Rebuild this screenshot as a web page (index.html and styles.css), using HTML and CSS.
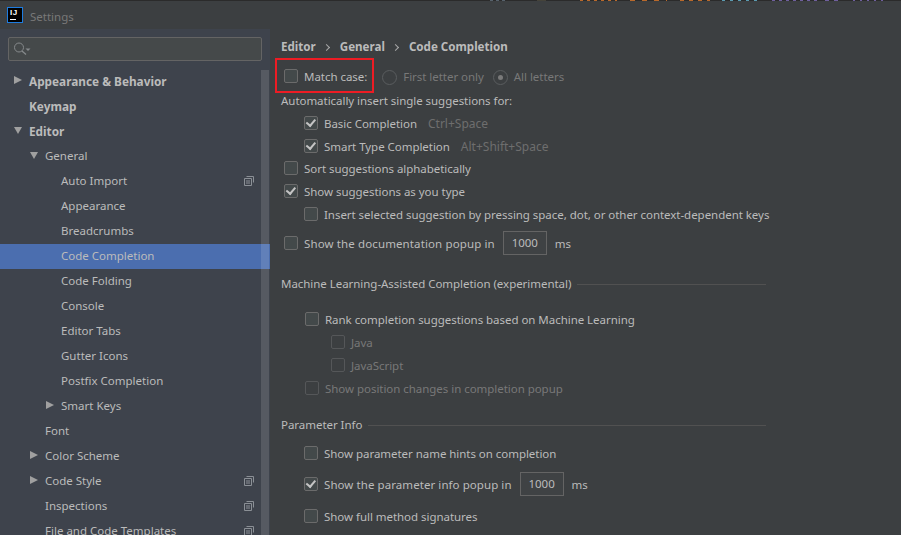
FILE: index.html
```html
<!DOCTYPE html>
<html lang="en">
<head>
<meta charset="utf-8">
<title>Settings</title>
<link rel="stylesheet" href="styles.css">
</head>
<body>
<div class="window">
  <div class="strip"></div>
  <header class="titlebar">
    <div class="ij-logo"><span class="ij-text">IJ</span><span class="ij-bar"></span></div>
    <span class="title">Settings</span>
  </header>
  <div class="content">
    <aside class="sidebar">
      <div class="search">
        <svg class="search-icon" width="18" height="14" viewBox="0 0 18 14"><circle cx="5" cy="5.5" r="4.5" fill="none" stroke="#868a8c" stroke-width="1"/><path d="M8 9 L12 12.5" stroke="#868a8c" stroke-width="1.3"/><path d="M11.5 6.5h5l-2.5 2.5z" fill="#868a8c"/></svg>
      </div>
      <div class="tree-wrap">
        <ul class="tree">
          <li class="node l0 bold"><i class="arrow right"></i>Appearance &amp; Behavior</li>
          <li class="node l0 bold">Keymap</li>
          <li class="node l0 bold"><i class="arrow down"></i>Editor</li>
          <li class="node l1"><i class="arrow down"></i>General</li>
          <li class="node l2">Auto Import<svg class="copy" viewBox="0 0 10 10"><use href="#copy"/></svg></li>
          <li class="node l2">Appearance</li>
          <li class="node l2">Breadcrumbs</li>
          <li class="node l2 selected">Code Completion</li>
          <li class="node l2">Code Folding</li>
          <li class="node l2">Console</li>
          <li class="node l2">Editor Tabs</li>
          <li class="node l2">Gutter Icons</li>
          <li class="node l2">Postfix Completion</li>
          <li class="node l2"><i class="arrow right"></i>Smart Keys</li>
          <li class="node l1">Font</li>
          <li class="node l1"><i class="arrow right"></i>Color Scheme</li>
          <li class="node l1"><i class="arrow right"></i>Code Style<svg class="copy" viewBox="0 0 10 10"><use href="#copy"/></svg></li>
          <li class="node l1">Inspections<svg class="copy" viewBox="0 0 10 10"><use href="#copy"/></svg></li>
          <li class="node l1">File and Code Templates<svg class="copy" viewBox="0 0 10 10"><use href="#copy"/></svg></li>
        </ul>
        <div class="scrollbar"></div>
      </div>
    </aside>
    <main class="main">
      <nav class="crumbs"><span>Editor</span><i class="chev"></i><span>General</span><i class="chev"></i><span>Code Completion</span></nav>
      <div class="row r-match">
        <label class="check highlight"><i class="box"></i>Match case:</label>
        <label class="radio off"><i class="dot"></i>First letter only</label>
        <label class="radio off"><i class="dot on"></i>All letters</label>
      </div>
      <div class="row r-plain">Automatically insert single suggestions for:</div>
      <div class="row r-23 in1"><label class="check"><i class="box checked"></i>Basic Completion</label><span class="hint">Ctrl+Space</span></div>
      <div class="row r-23 in1"><label class="check"><i class="box checked"></i>Smart Type Completion</label><span class="hint">Alt+Shift+Space</span></div>
      <div class="row r-22"><label class="check"><i class="box"></i>Sort suggestions alphabetically</label></div>
      <div class="row r-23"><label class="check"><i class="box checked"></i>Show suggestions as you type</label></div>
      <div class="row r-23 in1"><label class="check"><i class="box"></i>Insert selected suggestion by pressing space, dot, or other context-dependent keys</label></div>
      <div class="row r-29"><label class="check wide"><i class="box"></i>Show the documentation popup in</label><span class="num">1000</span><span class="unit">ms</span></div>
      <div class="row group r-40"><span>Machine Learning-Assisted Completion (experimental)</span><i class="rule"></i></div>
      <div class="row r-36 in1b"><label class="check"><i class="box"></i>Rank completion suggestions based on Machine Learning</label></div>
      <div class="row r-23 in2"><label class="check off"><i class="box dim"></i>Java</label></div>
      <div class="row r-23 in2"><label class="check off"><i class="box dim"></i>JavaScript</label></div>
      <div class="row r-23 in1b"><label class="check off"><i class="box dim"></i>Show position changes in completion popup</label></div>
      <div class="row group r-36"><span>Parameter Info</span><i class="rule"></i></div>
      <div class="row r-29 in1"><label class="check"><i class="box"></i>Show parameter name hints on completion</label></div>
      <div class="row r-31 in1"><label class="check wide-s"><i class="box checked"></i>Show the parameter info popup in</label><span class="num">1000</span><span class="unit">ms</span></div>
      <div class="row r-32 in1"><label class="check"><i class="box"></i>Show full method signatures</label></div>
    </main>
  </div>
</div>
<svg class="defs" width="0" height="0"><symbol id="copy" viewBox="0 0 10 10"><path d="M2.5 .5h7v6M.5 2.5h7v7h-7z" fill="none" stroke="#8b9096"/><path d="M2 5h4M2 7h4" stroke="#8b9096"/></symbol></svg>
</body>
</html>
```
FILE: styles.css
```css
*, *::after { box-sizing: border-box; }
html, body { margin: 0; height: 100%; overflow: hidden; }
body { background: #3c3f41; color: #bbbbbb; font: 11.5px/20px "Noto Sans", "Open Sans", sans-serif; }
ul { list-style: none; margin: 0; padding: 0; }
i { display: block; font-style: normal; }
.defs { position: absolute; }
.window { height: 535px; display: flex; flex-direction: column; overflow: hidden; }

.strip {
  height: 1px; flex: none; background-color: #2b2b2b; background-repeat: no-repeat; background-size: 18px 1px, 9px 1px, 37px 1px, 37px 1px, 30px 1px, 38px 1px, 45px 1px, 18px 1px, 30px 1px;
  background-position: 490px 0, 537px 0, 580px 0, 630px 0, 680px 0, 722px 0, 772px 0, 825px 0, 853px 0;
  background-image:
    repeating-linear-gradient(90deg, #56616b 0 3px, transparent 3px 6px),
    linear-gradient(#45433a, #45433a),
    repeating-linear-gradient(90deg, #b9692b 0 3px, transparent 3px 7px),
    repeating-linear-gradient(90deg, #b9692b 0 5px, transparent 5px 12px),
    repeating-linear-gradient(90deg, #b9692b 0 4px, transparent 4px 9px),
    repeating-linear-gradient(90deg, #5a9ab0 0 3px, transparent 3px 8px),
    repeating-linear-gradient(90deg, #6f5f9e 0 3px, transparent 3px 7px),
    repeating-linear-gradient(90deg, #6f5f9e 0 4px, transparent 4px 9px),
    repeating-linear-gradient(90deg, #6f5f9e 0 2px, transparent 2px 7px);
}
.titlebar { height: 28px; flex: none; display: flex; align-items: flex-start; padding: 6px 0 0 7px; gap: 7px; }
.ij-logo { width: 16px; height: 16px; background: #000; border: 1px solid #1e7ce0; display: flex; flex-direction: column; align-items: flex-start; padding: 1px 0 0 2px; }
.ij-text { font: bold 8px/8px "Liberation Sans", sans-serif; color: #fff; letter-spacing: .5px; }
.ij-bar { width: 6px; height: 1px; background: #fff; margin-top: 2px; }
.title { color: #787878; }

.content { flex: 1; display: flex; min-height: 0; }
.sidebar { width: 270px; flex: none; background: #3e434c; padding-top: 8px; display: flex; flex-direction: column; }
.search { margin: 0 8px; width: 254px; height: 24px; flex: none; background: #45494a; border: 1px solid #646464; border-radius: 2px; padding: 4px 0 0 5px; }
.search-icon { display: block; }
.tree-wrap { flex: 1; display: flex; min-height: 0; margin-top: 8px; position: relative; }
.tree { flex: 1; min-width: 0; }
.scrollbar { position: absolute; right: 1px; top: 1px; bottom: 0; width: 8px; background: rgba(255, 255, 255, .125); }
.node { height: 25px; line-height: 24px; white-space: nowrap; position: relative; }
.l0 { padding-left: 29px; }
.l1 { padding-left: 45px; }
.l2 { padding-left: 61px; }
.bold { font-weight: 700; font-size: 11.8px; }
.selected { background: #4b6eaf; }
.arrow { position: absolute; width: 0; height: 0; }
.arrow.right { border-left: 8px solid #a0a0a0; border-top: 4.5px solid transparent; border-bottom: 4.5px solid transparent; top: 7px; margin-left: -15px; }
.arrow.down { border-top: 7px solid #a0a0a0; border-left: 4.5px solid transparent; border-right: 4.5px solid transparent; top: 7.5px; margin-left: -15px; }
.copy { position: absolute; left: 244px; top: 7px; width: 10px; height: 10px; }

.main { flex: 1; min-width: 0; padding: 8px 0 0 11px; display: flex; flex-direction: column; }
.crumbs { height: 20px; flex: none; display: flex; align-items: center; font-weight: 700; font-size: 11.6px; }
.chev { width: 5px; height: 5px; border-top: 1px solid #a9a9a9; border-right: 1px solid #a9a9a9; transform: rotate(45deg); margin: 0 11px 0 8px; }
.row { height: 20px; flex: none; display: flex; align-items: center; white-space: nowrap; letter-spacing: -.04px; }
.r-match { margin-top: 10px; }
.r-plain { margin-top: 4px; }
.r-22 { margin-top: 2px; }
.r-23 { margin-top: 3px; }
.r-29 { margin-top: 9px; }
.r-31 { margin-top: 11px; }
.r-32 { margin-top: 12px; }
.r-36 { margin-top: 16px; }
.r-40 { margin-top: 20px; }
.in1 { padding-left: 23px; }
.in1b { padding-left: 24px; }
.in2 { padding-left: 50px; }
.row > .check:first-child { margin-left: 3px; }
.in1 > .check:first-child, .in1b > .check:first-child, .in2 > .check:first-child { margin-left: 0; }
.check { display: flex; align-items: center; gap: 6px; position: relative; }
.wide { letter-spacing: .12px; }
.wide-s { letter-spacing: .07px; }
.box { width: 14px; height: 14px; margin-top: -2px; background: #43494a; border: 1px solid #6b6b6b; border-radius: 2px; position: relative; flex: none; }
.box.checked::after { content: ""; position: absolute; left: 2px; top: 1px; width: 9px; height: 6px; border-left: 2px solid #c4c4c4; border-bottom: 2px solid #c4c4c4; transform: rotate(-50deg) translate(-1px, 0); }
.box.dim { background: #3c3f41; border-color: #555759; }
.off { color: #787878; }
.highlight::after { content: ""; position: absolute; left: -9px; top: -9px; width: 99px; height: 35px; border: 2px solid #ed1c24; }
.radio { display: flex; align-items: center; gap: 6px; margin-left: 15px; }
.radio + .radio { margin-left: 9px; }
.dot { width: 15px; height: 15px; border-radius: 50%; border: 1px solid #5a5d5f; position: relative; }
.dot.on::after { content: ""; position: absolute; left: 4px; top: 4px; width: 5px; height: 5px; border-radius: 50%; background: #7a7a7a; }
.hint { color: #6e6e6e; margin-left: 11px; font-size: 12px; letter-spacing: 0; }
.num { width: 44px; height: 24px; margin: -2px 0 0 8px; border: 1px solid #646464; text-align: center; line-height: 22px; background: #3f4244; }
.unit { margin-left: 8px; }
.group { gap: 6px; }
.rule { width: 0; flex: 1; height: 1px; background: #515151; margin-right: 135px; }
```
